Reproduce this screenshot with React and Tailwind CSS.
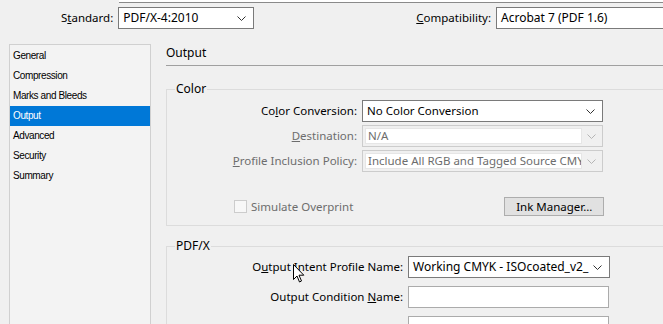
const ui = { fontFamily: '"Noto Sans", "Open Sans", sans-serif' };
const side = { fontFamily: '"Liberation Sans", Arial, sans-serif' };

function Chevron({ color = "#333" }) {
  return (
    <svg width="9" height="5" viewBox="0 0 9 5" className="shrink-0">
      <path d="M0.5 0.5 L4.5 4.5 L8.5 0.5" fill="none" stroke={color} strokeWidth="1" />
    </svg>
  );
}

function Select({ value, className = "" }) {
  return (
    <div className={`flex h-[22px] items-center border border-[#7a7a7a] bg-white pl-[4px] pr-[7px] ${className}`}>
      <span className="flex-1 whitespace-nowrap leading-[16px] text-black">{value}</span>
      <Chevron />
    </div>
  );
}

function DisabledSelect({ value }) {
  return (
    <div className="flex h-[22px] w-[241px] items-center border border-[#cccccc] bg-[#f0f0f0] p-[2px]">
      <div className="flex h-full flex-1 items-center overflow-hidden whitespace-nowrap border border-[#e6e6e6] bg-white pl-[2px] text-[#6d6d6d]">
        {value}
      </div>
      <div className="flex w-[18px] justify-center">
        <Chevron color="#b5b5b5" />
      </div>
    </div>
  );
}

function Row({ label, labelClass = "text-black", children, labelW, gap }) {
  return (
    <div className="flex items-center">
      <div className={`text-right whitespace-nowrap ${labelClass}`} style={{ width: labelW, marginRight: gap }}>
        {label}
      </div>
      {children}
    </div>
  );
}

export default function App() {
  const items = ["General", "Compression", "Marks and Bleeds", "Output", "Advanced", "Security", "Summary"];
  return (
    <div className="relative h-[324px] w-[663px] overflow-hidden bg-[#f0f0f0] text-[11.5px] leading-none" style={ui}>
      <div className="ml-[119px] h-[3px] border-b border-[#8a8a8a] bg-white" />

      <div className="mt-[4px] flex h-[22px] items-center">
        <span className="ml-[61px] mr-[5px]">
          S<u>t</u>andard:
        </span>
        <Select value="PDF/X-4:2010" className="w-[136px] text-[12px]" />
        <span className="ml-auto mr-[5px]">
          <u>C</u>ompatibility:
        </span>
        <Select value="Acrobat 7 (PDF 1.6)" className="mr-[-40px] w-[207px] text-[12px]" />
      </div>

      <div className="mt-[15px] flex">
        <div className="ml-[9px] h-[300px] w-[142px] border border-[#d0d0d0] bg-[#f3f3f3] pt-[1px]" style={side}>
          {items.map((it) => (
            <div
              key={it}
              className={`flex h-[20px] items-center pl-[3px] text-[10px] tracking-[-0.4px] ${
                it === "Output" ? "bg-[#0078d7] text-white" : "text-black"
              }`}
            >
              {it}
            </div>
          ))}
        </div>

        <div className="ml-[15px] flex-1">
          <div className="border-b border-[#a0a0a0] pb-[6px] pt-[3px] text-[12px]">Output</div>

          <fieldset className="mt-[17px] mr-[-20px] h-[143px] border border-[#dcdcdc] px-0">
            <legend className="ml-[8px] px-[1px] text-[12px] leading-[12px]">Color</legend>
            <div className="mt-[5px] flex flex-col gap-[3px]">
              <Row label={<>Co<u>l</u>or Conversion:</>} labelW={190} gap={5}>
                <Select value="No Color Conversion" className="w-[241px]" />
              </Row>
              <Row label={<><u>D</u>estination:</>} labelClass="text-[#6d6d6d]" labelW={190} gap={5}>
                <DisabledSelect value="N/A" />
              </Row>
              <Row label={<><u>P</u>rofile Inclusion Policy:</>} labelClass="text-[#6d6d6d]" labelW={190} gap={5}>
                <DisabledSelect value="Include All RGB and Tagged Source CMYK" />
              </Row>
            </div>
            <div className="mt-[25px] flex items-center">
              <div className="ml-[67px] h-[13px] w-[13px] border border-[#cccccc] bg-[#f7f7f7]" />
              <span className="ml-[4px] text-[#6d6d6d]">Simulate Overprint</span>
              <div className="ml-[151px] flex h-[19px] w-[100px] items-center justify-center border border-[#adadad] bg-[#e1e1e1]">
                Ink Manager...
              </div>
            </div>
          </fieldset>

          <fieldset className="mt-[14px] mr-[-20px] h-[100px] border border-[#dcdcdc] px-0">
            <legend className="ml-[8px] px-[1px] text-[12px] leading-[12px]">PDF/X</legend>
            <div className="mt-[4px] flex flex-col gap-[8px]">
              <Row label={<>O<u>u</u>tput Intent Profile Name:</>} labelW={236} gap={5}>
                <Select value="Working CMYK - ISOcoated_v2_" className="w-[202px] text-[12px]" />
              </Row>
              <Row label={<>Output Condition <u>N</u>ame:</>} labelW={236} gap={5}>
                <div className="h-[22px] w-[201px] border border-[#ababab] bg-white" />
              </Row>
              <Row label="" labelW={236} gap={5}>
                <div className="h-[22px] w-[201px] border border-[#ababab] bg-white" />
              </Row>
            </div>
          </fieldset>
        </div>
      </div>

      <svg className="absolute left-[293px] top-[264px]" width="12" height="20" viewBox="0 0 12 20">
        <path
          d="M0.5 0.5 L0.5 15.5 L4 12 L6.5 18 L8.5 17 L6 11.2 L10.8 11.2 Z"
          fill="white"
          stroke="black"
          strokeWidth="1"
          strokeLinejoin="miter"
        />
      </svg>
    </div>
  );
}
